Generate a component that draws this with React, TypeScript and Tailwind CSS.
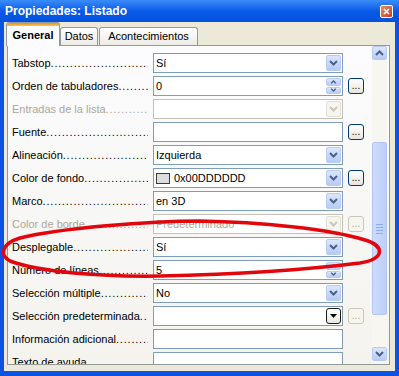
import React, { FunctionComponent } from 'react';

type Control = 'combo' | 'spin' | 'classic' | 'none';

interface IRow {
  label: string;
  value?: string;
  control: Control;
  disabled?: boolean;
  more?: 'on' | 'off';
  swatch?: string;
}

const rows: IRow[] = [
  { label: 'Tabstop', value: 'Sí', control: 'combo' },
  { label: 'Orden de tabuladores', value: '0', control: 'spin', more: 'on' },
  { label: 'Entradas de la lista', control: 'combo', disabled: true },
  { label: 'Fuente', control: 'none', more: 'on' },
  { label: 'Alineación', value: 'Izquierda', control: 'combo' },
  { label: 'Color de fondo', value: '0x00DDDDDD', control: 'combo', more: 'on', swatch: '#dddddd' },
  { label: 'Marco', value: 'en 3D', control: 'combo' },
  { label: 'Color de borde', value: 'Predeterminado', control: 'combo', disabled: true, more: 'off' },
  { label: 'Desplegable', value: 'Sí', control: 'combo' },
  { label: 'Número de líneas', value: '5', control: 'spin' },
  { label: 'Selección múltiple', value: 'No', control: 'combo' },
  { label: 'Selección predeterminada', control: 'classic', more: 'off' },
  { label: 'Información adicional', control: 'none' },
  { label: 'Texto de ayuda', control: 'none' },
];

const DOTS = '..............................................................';

const Chevron = ({ up = false, color = '#4d6185', small = false }: { up?: boolean; color?: string; small?: boolean }) => (
  <svg width={small ? 7 : 9} height={small ? 4 : 6} viewBox="0 0 9 6">
    <path d={up ? 'M1 5l3.5-3.5L8 5' : 'M1 1l3.5 3.5L8 1'} stroke={color} strokeWidth="2" fill="none" />
  </svg>
);

const ComboButton = ({ disabled }: { disabled?: boolean }) => (
  <div
    className={`ml-auto mr-[1px] flex h-[16px] w-[15px] items-center justify-center rounded-[2px] border ${
      disabled ? 'border-[#e2e0d6] bg-[#f6f5ee]' : 'border-[#b9cbf3] bg-gradient-to-b from-[#dce6fd] to-[#b7cbf7]'
    }`}
  >
    <Chevron color={disabled ? '#c9c7ba' : '#4d6185'} />
  </div>
);

const SpinButton = () => (
  <div className="ml-auto mr-[1px] flex h-[16px] w-[15px] flex-col gap-[1px]">
    <div className="flex flex-1 items-center justify-center rounded-[2px] border border-[#b9cbf3] bg-gradient-to-b from-[#dce6fd] to-[#b7cbf7]">
      <Chevron up small />
    </div>
    <div className="flex flex-1 items-center justify-center rounded-[2px] border border-[#b9cbf3] bg-gradient-to-b from-[#dce6fd] to-[#b7cbf7]">
      <Chevron small />
    </div>
  </div>
);

const ClassicButton = () => (
  <div className="ml-auto mr-[1px] flex h-[16px] w-[15px] items-center justify-center rounded-[3px] border border-[#1c1c1c] bg-gradient-to-b from-white to-[#e8e7e2]">
    <svg width="7" height="5" viewBox="0 0 7 5">
      <path d="M0 0h7L3.5 4z" fill="#000" />
    </svg>
  </div>
);

const MoreButton = ({ off }: { off?: boolean }) => (
  <div
    className={`ml-[5px] flex h-[16px] w-[16px] shrink-0 items-end justify-center rounded-[3px] border pb-[2px] text-[10px] leading-none ${
      off ? 'border-[#cac8bb] bg-[#f6f5ee] text-[#aca899]' : 'border-[#003c74] bg-gradient-to-b from-white to-[#e6e5df] text-black'
    }`}
  >
    ...
  </div>
);

const PropRow: FunctionComponent<{ row: IRow }> = ({ row }) => (
  <div className="flex h-[20px] shrink-0 items-center">
    <div
      className={`flex w-[136px] overflow-hidden whitespace-nowrap ${row.disabled ? 'text-[#aca899]' : 'text-black'}`}
    >
      <span className="shrink-0">{row.label}</span>
      <span className="overflow-hidden tracking-[0.8px]">{DOTS}</span>
    </div>
    <div
      className={`ml-[5px] flex h-[20px] w-[190px] shrink-0 items-center border bg-white pl-[2px] ${
        row.disabled ? 'border-[#c4c2b6]' : 'border-[#7f9db9]'
      }`}
    >
      {row.swatch && (
        <span className="mr-[4px] h-[11px] w-[14px] border border-[#3a3a3a]" style={{ background: row.swatch }} />
      )}
      <span className={`whitespace-nowrap ${row.disabled ? 'text-[#aca899]' : 'text-black'}`}>{row.value}</span>
      {row.control === 'combo' && <ComboButton disabled={row.disabled} />}
      {row.control === 'spin' && <SpinButton />}
      {row.control === 'classic' && <ClassicButton />}
    </div>
    {row.more && <MoreButton off={row.more === 'off'} />}
  </div>
);

const ScrollBar = () => (
  <div className="flex w-[15px] shrink-0 flex-col bg-[#f7f6f1] pb-[3px]">
    <div className="flex h-[14px] items-center justify-center rounded-[2px] border border-[#b9cbf3] bg-gradient-to-b from-[#dce6fd] to-[#b7cbf7]">
      <Chevron up />
    </div>
    <div className="flex-1 pt-[82px]">
      <div className="flex h-[173px] flex-col items-center justify-center gap-[2px] rounded-[2px] border border-[#b3c6f2] bg-gradient-to-r from-[#cddbfd] to-[#bccff9]">
        <span className="h-[1px] w-[7px] bg-[#8eaef4]" />
        <span className="h-[1px] w-[7px] bg-[#8eaef4]" />
        <span className="h-[1px] w-[7px] bg-[#8eaef4]" />
        <span className="h-[1px] w-[7px] bg-[#8eaef4]" />
      </div>
    </div>
    <div className="flex h-[14px] items-center justify-center rounded-[2px] border border-[#b9cbf3] bg-gradient-to-b from-[#dce6fd] to-[#b7cbf7]">
      <Chevron />
    </div>
  </div>
);

const App: FunctionComponent = () => {
  return (
    <div className="relative flex h-[376px] w-[399px] flex-col bg-[#0b53e0] font-['Liberation_Sans',Arial,sans-serif] text-[11px]">
      {/* title bar */}
      <div className="flex h-[22px] shrink-0 items-center bg-gradient-to-b from-[#3a8cf8] via-[#0a5ae9] to-[#0252dd] pl-[5px] pr-[6px]">
        <span className="text-[12px] font-bold text-white">Propiedades: Listado</span>
        <div className="ml-auto flex h-[13px] w-[13px] items-center justify-center rounded-[2px] border border-white bg-gradient-to-br from-[#ec8a6a] to-[#c73a17]">
          <svg width="7" height="7" viewBox="0 0 7 7">
            <path d="M1 1l5 5M6 1L1 6" stroke="#fff" strokeWidth="1.6" />
          </svg>
        </div>
      </div>

      {/* body */}
      <div className="mx-[4px] mb-[5px] flex flex-1 flex-col bg-[#ece9d8]">
        <div className="flex h-[23px] shrink-0 items-end pl-[2px]">
          <div className="relative z-10 -mb-[1px] flex h-[24px] w-[54px] flex-col overflow-hidden rounded-t-[3px] border border-b-0 border-[#919b9c] bg-[#fcfcfe]">
            <div className="h-[3px] bg-gradient-to-b from-[#e68b2c] to-[#ffc73c]" />
            <div className="flex flex-1 items-center justify-center pb-[2px] font-bold">General</div>
          </div>
          <div className="flex h-[18px] w-[38px] items-center justify-center rounded-t-[3px] border border-b-0 border-[#919b9c] bg-gradient-to-b from-white to-[#ecebe6]">
            Datos
          </div>
          <div className="ml-[1px] flex h-[18px] w-[99px] items-center justify-center rounded-t-[3px] border border-b-0 border-[#919b9c] bg-gradient-to-b from-white to-[#ecebe6]">
            Acontecimientos
          </div>
        </div>

        <div className="ml-[3px] flex h-[320px] w-[383px] border border-[#919b9c] bg-gradient-to-b from-[#fcfcfe] to-[#f4f3ee] pr-[2px]">
          <div className="flex flex-1 flex-col gap-[3px] overflow-hidden pl-[4px] pt-[7px]">
            {rows.map((row) => (
              <PropRow key={row.label} row={row} />
            ))}
          </div>
          <ScrollBar />
        </div>
      </div>

      {/* red annotation */}
      <svg className="pointer-events-none absolute inset-0" width="399" height="376" viewBox="0 0 399 376">
        <path
          d="M200 221 C150 221, 60 228, 20 238 C0 244, 0 256, 10 261 C40 272, 100 277, 160 276 C250 274, 320 268, 360 263 C385 259, 385 246, 365 240 C330 229, 260 222, 200 221 Z"
          stroke="#e2060c"
          strokeWidth="3.5"
          fill="none"
        />
      </svg>
    </div>
  );
};

export default App;
